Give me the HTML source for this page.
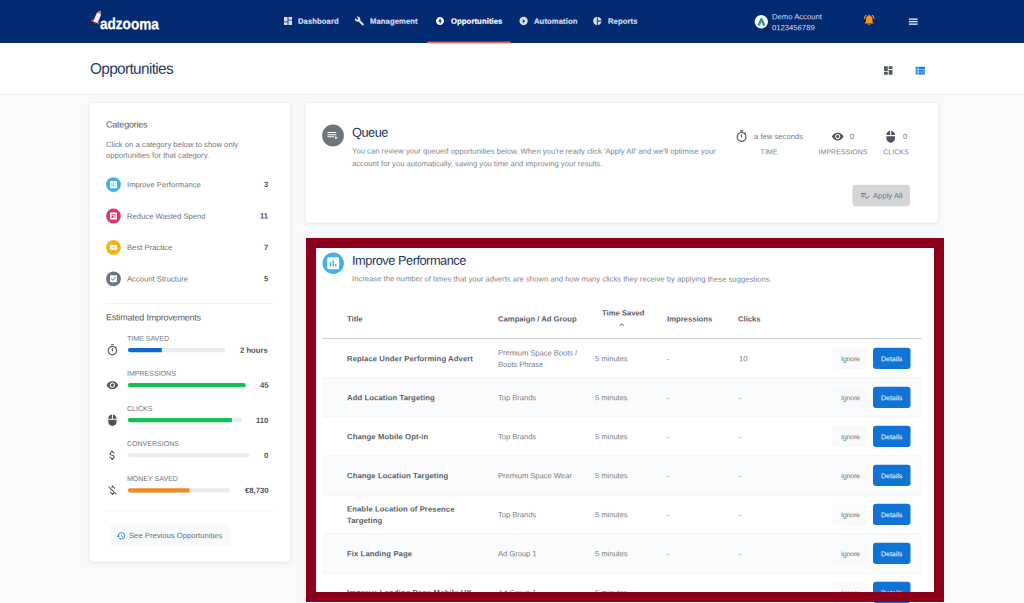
<!DOCTYPE html>
<html><head><meta charset="utf-8"><title>Opportunities</title>
<style>
*{box-sizing:border-box;margin:0;padding:0}
html,body{width:1024px;height:603px;overflow:hidden}
body{font-family:"Liberation Sans",sans-serif;background:#f7f9fb;position:relative}
.abs{position:absolute}
.t{white-space:nowrap;line-height:1}
svg{display:block;overflow:visible}
</style></head><body>
<div class="abs" style="left:0px;top:43px;width:1024px;height:51.5px;background:#fff;border-bottom:1px solid #eceef2;"></div>
<svg class="abs" style="left:0;top:0" width="1024" height="603" viewBox="0 0 1024 603">
<defs><filter id="sh" x="-5%" y="-5%" width="110%" height="110%"><feDropShadow dx="0" dy="0.8" stdDeviation="1.6" flood-color="#3c465a" flood-opacity=".17"/></filter></defs>
<rect x="0" y="0" width="1024" height="43" fill="#012a70"/>
<svg x="88.3" y="8.7" width="17.3" height="19.5" viewBox="0 0 16 18">
<g transform="rotate(24 8 9)">
<path d="M8 1.2 C9.6 2.6 10.2 4.2 10.2 6.2 L10.2 13 L5.8 13 L5.8 6.2 C5.8 4.2 6.4 2.6 8 1.2Z" fill="#f4eef0"/>
<path d="M8 1.2 C8.9 2 9.5 2.9 9.8 3.9 L6.2 3.9 C6.5 2.9 7.1 2 8 1.2Z" fill="#e8596b"/>
<path d="M5.8 10 L3.4 13.4 L5.8 13.4Z M10.2 10 L12.6 13.4 L10.2 13.4Z" fill="#d8475c"/>
<path d="M6.6 13 L9.4 13 L8 15.2Z" fill="#b03a55" opacity=".8"/>
</g></svg>
<svg x="282.6" y="15.6" width="10.8" height="10.8" viewBox="0 0 24 24"><path fill="#d3ddf0" d="M3 13h8V3H3v10zm0 8h8v-6H3v6zm10 0h8V11h-8v10zm0-18v6h8V3h-8z"/></svg>
<svg x="354.5" y="16" width="10" height="10" viewBox="0 0 24 24"><path fill="#d3ddf0" d="M22.7 19l-9.1-9.1c.9-2.3.4-5-1.5-6.9-2-2-5-2.4-7.4-1.3L9 6 6 9 1.6 4.7C.4 7.1.9 10.1 2.9 12.1c1.9 1.9 4.6 2.4 6.9 1.5l9.1 9.1c.4.4 1 .4 1.4 0l2.3-2.3c.5-.4.5-1.1.1-1.4z"/></svg>
<svg x="435.2" y="16.2" width="9.6" height="9.6" viewBox="0 0 24 24"><path fill="#ffffff" d="M12 2.02c-5.51 0-9.98 4.47-9.98 9.98s4.47 9.98 9.98 9.98 9.98-4.47 9.98-9.98S17.51 2.02 12 2.02zM11.48 20v-6.26H8L13 4v6.26h3.35L11.48 20z"/></svg>
<rect x="427.2" y="41.6" width="83.4" height="1.8" fill="#f0626c"/>
<svg x="518.6" y="16" width="10" height="10" viewBox="0 0 24 24"><path fill="#d3ddf0" d="M12 2C6.48 2 2 6.48 2 12s4.48 10 10 10 10-4.48 10-10S17.52 2 12 2zm-2 14.5v-9l6 4.5-6 4.5z"/></svg>
<svg x="592.3" y="16" width="10" height="10" viewBox="0 0 24 24"><path fill="#d3ddf0" d="M11 2v20c-5.07-.5-9-4.79-9-10s3.93-9.5 9-10zm2.03 0v8.99H22c-.47-4.74-4.24-8.52-8.97-8.99zm0 11.01V22c4.74-.47 8.5-4.25 8.97-8.99h-8.97z"/></svg>
<svg x="754.6" y="15.1" width="13.4" height="13.4" viewBox="0 0 13.6 13.6"><circle cx="6.8" cy="6.8" r="6.8" fill="#fdfdfe"/>
<path d="M4.6 9.6 L6.8 4.3" stroke="#4285e8" stroke-width="2.5" stroke-linecap="round"/><path d="M7.1 4.5 L9.5 9.7" stroke="#2fa24f" stroke-width="2.4" stroke-linecap="round"/></svg>
<svg x="862.7" y="13.3" width="13" height="13" viewBox="0 0 24 24"><path fill="#f7941d" d="M7.58 4.08L6.15 2.65C3.75 4.48 2.17 7.3 2.03 10.5h2c.15-2.65 1.51-4.97 3.55-6.42zm12.39 6.42h2c-.15-3.2-1.73-6.02-4.12-7.85l-1.42 1.43c2.02 1.45 3.39 3.77 3.54 6.42zM18 11c0-3.07-1.64-5.64-4.5-6.32V4c0-.83-.67-1.5-1.5-1.5s-1.5.67-1.5 1.5v.68C7.63 5.36 6 7.92 6 11v5l-2 2v1h16v-1l-2-2v-5zm-6 11c.14 0 .27-.01.4-.04.65-.14 1.18-.58 1.44-1.18.1-.24.15-.5.15-.78h-4c.01 1.1.9 2 2.01 2z"/></svg>
<rect x="908.9" y="18.45" width="8.7" height="1.35" fill="#e4ebfa"/>
<rect x="908.9" y="20.95" width="8.7" height="1.35" fill="#e4ebfa"/>
<rect x="908.9" y="23.45" width="8.7" height="1.35" fill="#e4ebfa"/>
<svg x="882.6" y="64.8" width="11.3" height="11.3" viewBox="0 0 24 24"><path fill="#505a60" d="M3 13h8V3H3v10zm0 8h8v-6H3v6zm10 0h8V11h-8v10zm0-18v6h8V3h-8z"/></svg>
<svg x="913.4" y="64" width="13.2" height="13.2" viewBox="0 0 24 24"><path fill="#1c83e2" d="M4 14h4v-4H4v4zm0 5h4v-4H4v4zM4 9h4V5H4v4zm5 5h12v-4H9v4zm0 5h12v-4H9v4zM9 5v4h12V5H9z"/></svg>
<svg x="0" y="0" width="1024" height="603"><rect x="90" y="103.1" width="199.8" height="458.6" rx="2" fill="#fff" filter="url(#sh)"/></svg>
<circle cx="113.5" cy="184.6" r="7.4" fill="#41b1ec"/>
<svg x="108.8" y="179.9" width="9.4" height="9.4" viewBox="0 0 24 24"><path fill="#ffffff" d="M19 3H5c-1.1 0-2 .9-2 2v14c0 1.1.9 2 2 2h14c1.1 0 2-.9 2-2V5c0-1.1-.9-2-2-2zM9 17H7v-7h2v7zm4 0h-2V7h2v10zm4 0h-2v-4h2v4z"/></svg>
<circle cx="113.5" cy="216" r="7.4" fill="#e3306f"/>
<svg x="108.8" y="211.3" width="9.4" height="9.4" viewBox="0 0 24 24"><path fill="#ffffff" d="M19 3H5c-1.1 0-2 .9-2 2v14c0 1.1.9 2 2 2h14c1.1 0 2-.9 2-2V5c0-1.1-.9-2-2-2zm-2 6H7V7h10v2zm-5 8H7v-6h5v6zm5 0h-3v-2h3v2zm0-4h-3v-2h3v2z"/></svg>
<circle cx="113.5" cy="247.4" r="7.4" fill="#f0b31d"/>
<svg x="109.9" y="245" width="7.2" height="4.8" viewBox="0 0 7.2 4.8"><rect width="7.2" height="4.8" rx=".6" fill="#fff"/><circle cx="3.6" cy="2.4" r=".9" fill="#f0b31d"/></svg>
<circle cx="113.5" cy="278.8" r="7.4" fill="#6c757d"/>
<svg x="108.8" y="274.1" width="9.4" height="9.4" viewBox="0 0 24 24"><path fill="#ffffff" d="M19 3H5c-1.11 0-2 .9-2 2v14c0 1.1.89 2 2 2h14c1.11 0 2-.9 2-2V5c0-1.1-.89-2-2-2zm-9 14l-5-5 1.41-1.41L10 14.17l7.59-7.59L19 8l-9 9z"/></svg>
<rect x="105.6" y="303" width="168" height="1" fill="#f0f2f5"/>
<rect x="127.9" y="348" width="97.7" height="4.2" rx="2.1" fill="#e9ecf0"/>
<path d="M130 348H161.8V352.2H130A2.1 2.1 0 0 1 130 348Z" fill="#1268d3"/>
<svg x="106.1" y="343.8" width="12.6" height="12.6" viewBox="0 0 24 24"><path fill="#4d565e" d="M15 1H9v2h6V1zm-4 13h2V8h-2v6zm8.03-6.61l1.42-1.42c-.43-.51-.9-.99-1.41-1.41l-1.42 1.42C16.07 4.74 14.12 4 12 4c-4.97 0-9 4.03-9 9s4.02 9 9 9 9-4.03 9-9c0-2.12-.74-4.07-1.97-5.61zM12 20c-3.87 0-7-3.13-7-7s3.13-7 7-7 7 3.13 7 7-3.13 7-7 7z"/></svg>
<rect x="127.9" y="383.05" width="117.8" height="4.2" rx="2.1" fill="#e9ecf0"/>
<rect x="127.9" y="383.05" width="117.8" height="4.2" rx="2.1" fill="#14bf53"/>
<svg x="106.1" y="378.85" width="12.6" height="12.6" viewBox="0 0 24 24"><path fill="#4d565e" d="M12 4.5C7 4.5 2.73 7.61 1 12c1.73 4.39 6 7.5 11 7.5s9.27-3.11 11-7.5c-1.73-4.39-6-7.5-11-7.5zM12 17c-2.76 0-5-2.24-5-5s2.24-5 5-5 5 2.24 5 5-2.24 5-5 5zm0-8c-1.66 0-3 1.34-3 3s1.34 3 3 3 3-1.34 3-3-1.34-3-3-3z"/></svg>
<rect x="127.9" y="418.1" width="114.2" height="4.2" rx="2.1" fill="#e9ecf0"/>
<path d="M130 418.1H231.9V422.3H130A2.1 2.1 0 0 1 130 418.1Z" fill="#14bf53"/>
<svg x="106.1" y="413.9" width="12.6" height="12.6" viewBox="0 0 24 24"><path fill="#4d565e" d="M13 1.07V9h7c0-4.08-3.05-7.44-7-7.93zM4 15c0 4.42 3.58 8 8 8s8-3.58 8-8v-4H4v4zm7-13.93C7.05 1.56 4 4.92 4 9h7V1.07z"/></svg>
<rect x="127.9" y="453.15" width="121.8" height="4.2" rx="2.1" fill="#e9ecf0"/>
<svg x="106.1" y="448.95" width="12.6" height="12.6" viewBox="0 0 24 24"><path fill="#4d565e" d="M11.8 10.9c-2.27-.59-3-1.2-3-2.15 0-1.09 1.01-1.85 2.7-1.85 1.78 0 2.44.85 2.5 2.1h2.21c-.07-1.72-1.12-3.3-3.21-3.81V3h-3v2.16c-1.94.42-3.5 1.68-3.5 3.61 0 2.31 1.91 3.46 4.7 4.13 2.5.6 3 1.48 3 2.41 0 .69-.49 1.79-2.7 1.79-2.06 0-2.87-.92-2.98-2.1h-2.2c.12 2.19 1.76 3.42 3.68 3.83V21h3v-2.15c1.95-.37 3.5-1.5 3.5-3.55 0-2.84-2.43-3.81-4.7-4.4z"/></svg>
<rect x="127.9" y="488.2" width="102.4" height="4.2" rx="2.1" fill="#e9ecf0"/>
<path d="M130 488.2H189.5V492.4H130A2.1 2.1 0 0 1 130 488.2Z" fill="#f68a1e"/>
<svg x="106.1" y="484" width="12.6" height="12.6" viewBox="0 0 24 24"><path fill="#4d565e" d="M12.5 6.9c1.78 0 2.44.85 2.5 2.1h2.21c-.07-1.72-1.12-3.3-3.21-3.81V3h-3v2.16c-.53.12-1.03.3-1.48.54l1.47 1.47c.41-.17.91-.27 1.51-.27zM5.33 4.06L4.06 5.33 7.5 8.77c0 2.08 1.56 3.21 3.91 3.91l3.51 3.51c-.34.48-1.05.91-2.42.91-2.06 0-2.87-.92-2.98-2.1h-2.2c.12 2.19 1.76 3.42 3.68 3.83V21h3v-2.15c.96-.18 1.82-.55 2.45-1.12l2.22 2.22 1.27-1.27L5.33 4.06z"/></svg>
<rect x="105.6" y="510.5" width="168" height="1" fill="#f0f2f5"/>
<rect x="109.7" y="524.7" width="120.6" height="20.8" rx="2" fill="#f7f9fb"/>
<svg x="116.3" y="531" width="9.7" height="9.7" viewBox="0 0 24 24"><path fill="#1c7fde" d="M13 3c-4.97 0-9 4.03-9 9H1l3.89 3.89.07.14L9 12H6c0-3.87 3.13-7 7-7s7 3.13 7 7-3.13 7-7 7c-1.93 0-3.68-.79-4.94-2.06l-1.42 1.42C8.27 19.99 10.51 21 13 21c4.97 0 9-4.03 9-9s-4.03-9-9-9zm-1 5v5l4.28 2.54.72-1.21-3.5-2.08V8H12z"/></svg>
<svg x="0" y="0" width="1024" height="603"><rect x="305.9" y="103.1" width="631.5" height="119.7" rx="2" fill="#fff" filter="url(#sh)"/></svg>
<circle cx="333" cy="135.5" r="10.9" fill="#6c757d"/>
<svg x="326.4" y="129.5" width="12.4" height="12.4" viewBox="0 0 24 24"><path fill="#ffffff" d="M19 9H2v2h17V9zm0-4H2v2h17V5zM2 15h13v-2H2v2zm15-2v6l5-3-5-3z"/></svg>
<svg x="735" y="129.8" width="13.2" height="13.2" viewBox="0 0 24 24"><path fill="#4d565e" d="M15 1H9v2h6V1zm-4 13h2V8h-2v6zm8.03-6.61l1.42-1.42c-.43-.51-.9-.99-1.41-1.41l-1.42 1.42C16.07 4.74 14.12 4 12 4c-4.97 0-9 4.03-9 9s4.02 9 9 9 9-4.03 9-9c0-2.12-.74-4.07-1.97-5.61zM12 20c-3.87 0-7-3.13-7-7s3.13-7 7-7 7 3.13 7 7-3.13 7-7 7z"/></svg>
<svg x="831.4" y="130.3" width="12.6" height="12.6" viewBox="0 0 24 24"><path fill="#4d565e" d="M12 4.5C7 4.5 2.73 7.61 1 12c1.73 4.39 6 7.5 11 7.5s9.27-3.11 11-7.5c-1.73-4.39-6-7.5-11-7.5zM12 17c-2.76 0-5-2.24-5-5s2.24-5 5-5 5 2.24 5 5-2.24 5-5 5zm0-8c-1.66 0-3 1.34-3 3s1.34 3 3 3 3-1.34 3-3-1.34-3-3-3z"/></svg>
<svg x="884.2" y="130.2" width="13" height="13" viewBox="0 0 24 24"><path fill="#4d565e" d="M13 1.07V9h7c0-4.08-3.05-7.44-7-7.93zM4 15c0 4.42 3.58 8 8 8s8-3.58 8-8v-4H4v4zm7-13.93C7.05 1.56 4 4.92 4 9h7V1.07z"/></svg>
<rect x="852.4" y="184.7" width="57.5" height="21.6" rx="3" fill="#d4d5d8"/>
<svg x="860.2" y="190.6" width="10" height="10" viewBox="0 0 24 24"><path fill="#6f7780" d="M14 10H2v2h12v-2zm0-4H2v2h12V6zM2 16h8v-2H2v2zm19.5-4.5L23 13l-6.99 7-4.51-4.5L13 14l3.01 3 5.49-5.5z"/></svg>
<svg x="0" y="0" width="1024" height="603"><rect x="305.9" y="238" width="631.5" height="400" rx="2" fill="#fff" filter="url(#sh)"/></svg>
<circle cx="333.2" cy="263.2" r="10.7" fill="#41b1ec"/>
<svg x="325.3" y="255.4" width="15.8" height="15.8" viewBox="0 0 24 24"><path fill="#ffffff" d="M19 3H5c-1.1 0-2 .9-2 2v14c0 1.1.9 2 2 2h14c1.1 0 2-.9 2-2V5c0-1.1-.9-2-2-2zM9 17H7v-7h2v7zm4 0h-2V7h2v10zm4 0h-2v-4h2v4z"/></svg>
<svg x="617" y="320" width="9.4" height="9.4" viewBox="0 0 24 24"><path fill="#575f68" d="M7.41 15.41L12 10.83l4.59 4.58L18 14l-6-6-6 6z"/></svg>
<rect x="322.5" y="338" width="599" height="1.1" fill="#cfd3d7"/>
<rect x="832.4" y="347.7" width="34.3" height="21.2" rx="3" fill="#f8f9fb"/>
<rect x="873" y="347.7" width="37.5" height="21.2" rx="3" fill="#0f74d6"/>
<rect x="322.5" y="378" width="599" height="39" fill="#fafbfd"/>
<rect x="322.5" y="377.5" width="599" height="1" fill="#f1f3f6"/>
<rect x="832.4" y="386.7" width="34.3" height="21.2" rx="3" fill="#f8f9fb"/>
<rect x="873" y="386.7" width="37.5" height="21.2" rx="3" fill="#0f74d6"/>
<rect x="322.5" y="416.5" width="599" height="1" fill="#f1f3f6"/>
<rect x="832.4" y="425.7" width="34.3" height="21.2" rx="3" fill="#f8f9fb"/>
<rect x="873" y="425.7" width="37.5" height="21.2" rx="3" fill="#0f74d6"/>
<rect x="322.5" y="456" width="599" height="39" fill="#fafbfd"/>
<rect x="322.5" y="455.5" width="599" height="1" fill="#f1f3f6"/>
<rect x="832.4" y="464.7" width="34.3" height="21.2" rx="3" fill="#f8f9fb"/>
<rect x="873" y="464.7" width="37.5" height="21.2" rx="3" fill="#0f74d6"/>
<rect x="322.5" y="494.5" width="599" height="1" fill="#f1f3f6"/>
<rect x="832.4" y="503.7" width="34.3" height="21.2" rx="3" fill="#f8f9fb"/>
<rect x="873" y="503.7" width="37.5" height="21.2" rx="3" fill="#0f74d6"/>
<rect x="322.5" y="534" width="599" height="39" fill="#fafbfd"/>
<rect x="322.5" y="533.5" width="599" height="1" fill="#f1f3f6"/>
<rect x="832.4" y="542.7" width="34.3" height="21.2" rx="3" fill="#f8f9fb"/>
<rect x="873" y="542.7" width="37.5" height="21.2" rx="3" fill="#0f74d6"/>
<rect x="322.5" y="572.5" width="599" height="1" fill="#f1f3f6"/>
<rect x="832.4" y="581.7" width="34.3" height="21.2" rx="3" fill="#f8f9fb"/>
<rect x="873" y="581.7" width="37.5" height="21.2" rx="3" fill="#0f74d6"/>
</svg>
<div class="abs t" style="top:16px;font-size:15.5px;color:#ffffff;-webkit-text-stroke:.3px #fff;transform:translateY(0.10px) rotate(.05deg) scaleX(0.875);transform-origin:0 50%;font-weight:bold;left:100px;">adzooma</div>
<div class="abs t" style="top:17px;font-size:7.68px;color:#d3ddf0;-webkit-text-stroke:.2px #d3ddf0;transform:translateY(0.80px) rotate(.05deg);font-weight:bold;letter-spacing:0.08px;left:298.2px;">Dashboard</div>
<div class="abs t" style="top:17px;font-size:7.68px;color:#d3ddf0;-webkit-text-stroke:.2px #d3ddf0;transform:translateY(0.80px) rotate(.05deg);font-weight:bold;letter-spacing:0.08px;left:370px;">Management</div>
<div class="abs t" style="top:17px;font-size:7.68px;color:#ffffff;-webkit-text-stroke:.2px #fff;transform:translateY(0.80px) rotate(.05deg);font-weight:bold;letter-spacing:0.09px;left:450.6px;">Opportunities</div>
<div class="abs t" style="top:17px;font-size:7.68px;color:#d3ddf0;-webkit-text-stroke:.2px #d3ddf0;transform:translateY(0.80px) rotate(.05deg);font-weight:bold;letter-spacing:0.08px;left:533.5px;">Automation</div>
<div class="abs t" style="top:17px;font-size:7.68px;color:#d3ddf0;-webkit-text-stroke:.2px #d3ddf0;transform:translateY(0.80px) rotate(.05deg);font-weight:bold;letter-spacing:0.08px;left:607.6px;">Reports</div>
<div class="abs t" style="top:13px;font-size:7.68px;color:#d5def2;transform:translateY(0.20px) rotate(.05deg);left:771.8px;">Demo Account</div>
<div class="abs t" style="top:24px;font-size:7.68px;color:#d5def2;transform:translateY(0.30px) rotate(.05deg);left:771.8px;">0123456789</div>
<div class="abs t" style="top:60px;font-size:15.36px;color:#1f3b6b;transform:translateY(0.80px) rotate(.05deg);letter-spacing:-0.64px;left:90.3px;">Opportunities</div>
<div class="abs t" style="top:120px;font-size:8.96px;color:#535b66;transform:translateY(0.40px) rotate(.05deg);letter-spacing:-0.19px;left:106.2px;">Categories</div>
<div class="abs t" style="top:141px;font-size:7.68px;color:#6f7781;transform:translateY(0.00px) rotate(.05deg);left:106.2px;">Click on a category below to show only</div>
<div class="abs t" style="top:151px;font-size:7.68px;color:#6f7781;transform:translateY(0.80px) rotate(.05deg);left:106.2px;">opportunities for that category.</div>
<div class="abs t" style="top:181px;font-size:7.68px;color:#6a727c;transform:translateY(0.30px) rotate(.05deg);left:126.8px;">Improve Performance</div>
<div class="abs t" style="top:181px;font-size:7.68px;color:#4a525c;transform:translateY(0.10px) rotate(.05deg);font-weight:bold;right:755.8px;">3</div>
<div class="abs t" style="top:212px;font-size:7.68px;color:#6a727c;transform:translateY(0.70px) rotate(.05deg);left:126.8px;">Reduce Wasted Spend</div>
<div class="abs t" style="top:212px;font-size:7.68px;color:#4a525c;transform:translateY(0.50px) rotate(.05deg);font-weight:bold;right:755.8px;">11</div>
<div class="abs t" style="top:244px;font-size:7.68px;color:#6a727c;transform:translateY(0.10px) rotate(.05deg);left:126.8px;">Best Practice</div>
<div class="abs t" style="top:243px;font-size:7.68px;color:#4a525c;transform:translateY(0.90px) rotate(.05deg);font-weight:bold;right:755.8px;">7</div>
<div class="abs t" style="top:275px;font-size:7.68px;color:#6a727c;transform:translateY(0.50px) rotate(.05deg);left:126.8px;">Account Structure</div>
<div class="abs t" style="top:275px;font-size:7.68px;color:#4a525c;transform:translateY(0.30px) rotate(.05deg);font-weight:bold;right:755.8px;">5</div>
<div class="abs t" style="top:313px;font-size:8.96px;color:#535b66;transform:translateY(0.40px) rotate(.05deg);letter-spacing:-0.19px;left:106.2px;">Estimated Improvements</div>
<div class="abs t" style="top:334px;font-size:7.04px;color:#6d757e;transform:translateY(0.80px) rotate(.05deg);left:126.8px;">TIME SAVED</div>
<div class="abs t" style="top:346px;font-size:7.68px;color:#4a525c;transform:translateY(0.80px) rotate(.05deg);font-weight:bold;right:755.8px;">2 hours</div>
<div class="abs t" style="top:369px;font-size:7.04px;color:#6d757e;transform:translateY(0.85px) rotate(.05deg);left:126.8px;">IMPRESSIONS</div>
<div class="abs t" style="top:381px;font-size:7.68px;color:#4a525c;transform:translateY(0.85px) rotate(.05deg);font-weight:bold;right:755.8px;">45</div>
<div class="abs t" style="top:404px;font-size:7.04px;color:#6d757e;transform:translateY(0.90px) rotate(.05deg);left:126.8px;">CLICKS</div>
<div class="abs t" style="top:416px;font-size:7.68px;color:#4a525c;transform:translateY(0.90px) rotate(.05deg);font-weight:bold;right:755.8px;">110</div>
<div class="abs t" style="top:439px;font-size:7.04px;color:#6d757e;transform:translateY(0.95px) rotate(.05deg);left:126.8px;">CONVERSIONS</div>
<div class="abs t" style="top:451px;font-size:7.68px;color:#4a525c;transform:translateY(0.95px) rotate(.05deg);font-weight:bold;right:755.8px;">0</div>
<div class="abs t" style="top:475px;font-size:7.04px;color:#6d757e;transform:translateY(0.00px) rotate(.05deg);left:126.8px;">MONEY SAVED</div>
<div class="abs t" style="top:487px;font-size:7.68px;color:#4a525c;transform:translateY(0.00px) rotate(.05deg);font-weight:bold;right:755.8px;">€8,730</div>
<div class="abs t" style="top:532px;font-size:7.68px;color:#6a727c;transform:translateY(0.10px) rotate(.05deg);left:129px;">See Previous Opportunities</div>
<div class="abs t" style="top:126px;font-size:12.8px;color:#1d3561;transform:translateY(0.80px) rotate(.05deg);letter-spacing:-0.5px;left:352.2px;">Queue</div>
<div class="abs t" style="top:147px;font-size:7.68px;color:#7d858e;transform:translateY(0.70px) rotate(.05deg);left:352.2px;">You can review your queued opportunities below. When you're ready click 'Apply All' and we'll optimise your</div>
<div class="abs t" style="top:160px;font-size:7.68px;color:#7d858e;transform:translateY(0.20px) rotate(.05deg);left:352.2px;">account for you automatically, saving you time and improving your results.</div>
<div class="abs t" style="top:133px;font-size:7.68px;color:#727a83;transform:translateY(0.10px) rotate(.05deg);left:753.7px;">a few seconds</div>
<div class="abs t" style="top:148px;font-size:7.04px;color:#7d858e;transform:translateY(0.30px) rotate(.05deg);left:618.6px;width:300px;text-align:center;">TIME</div>
<div class="abs t" style="top:133px;font-size:7.68px;color:#727a83;transform:translateY(0.10px) rotate(.05deg);left:850px;">0</div>
<div class="abs t" style="top:148px;font-size:7.04px;color:#7d858e;transform:translateY(0.30px) rotate(.05deg);left:692.5px;width:300px;text-align:center;">IMPRESSIONS</div>
<div class="abs t" style="top:133px;font-size:7.68px;color:#727a83;transform:translateY(0.10px) rotate(.05deg);left:902.7px;">0</div>
<div class="abs t" style="top:148px;font-size:7.04px;color:#7d858e;transform:translateY(0.30px) rotate(.05deg);left:745.6px;width:300px;text-align:center;">CLICKS</div>
<div class="abs t" style="top:192px;font-size:7.68px;color:#6f7780;transform:translateY(0.20px) rotate(.05deg);left:873px;">Apply All</div>
<div class="abs t" style="top:254px;font-size:12.8px;color:#1d3561;transform:translateY(0.70px) rotate(.05deg);letter-spacing:-0.48px;left:352.1px;">Improve Performance</div>
<div class="abs t" style="top:275px;font-size:7.68px;color:#7d858e;transform:translateY(0.50px) rotate(.05deg);left:352.1px;">Increase the number of times that your adverts are shown and how many clicks they receive by applying these suggestions.</div>
<div class="abs t" style="top:315px;font-size:7.68px;color:#575f68;transform:translateY(0.50px) rotate(.05deg);font-weight:bold;left:347.2px;">Title</div>
<div class="abs t" style="top:315px;font-size:7.68px;color:#575f68;transform:translateY(0.50px) rotate(.05deg);font-weight:bold;left:497.6px;">Campaign / Ad Group</div>
<div class="abs t" style="top:309px;font-size:7.68px;color:#575f68;transform:translateY(0.60px) rotate(.05deg);font-weight:bold;left:601.6px;">Time Saved</div>
<div class="abs t" style="top:315px;font-size:7.68px;color:#575f68;transform:translateY(0.50px) rotate(.05deg);font-weight:bold;left:666.6px;">Impressions</div>
<div class="abs t" style="top:315px;font-size:7.68px;color:#575f68;transform:translateY(0.50px) rotate(.05deg);font-weight:bold;left:738.4px;">Clicks</div>
<div class="abs t" style="top:355px;font-size:7.68px;color:#575f68;transform:translateY(0.25px) rotate(.05deg);font-weight:bold;letter-spacing:0.1px;left:346.8px;">Replace Under Performing Advert</div>
<div class="abs t" style="top:349px;font-size:7.68px;color:#767e87;transform:translateY(0.40px) rotate(.05deg);letter-spacing:-0.07px;left:497.6px;">Premium Space Boots /</div>
<div class="abs t" style="top:361px;font-size:7.68px;color:#767e87;transform:translateY(0.10px) rotate(.05deg);letter-spacing:-0.07px;left:497.6px;">Boots Phrase</div>
<div class="abs t" style="top:355px;font-size:7.68px;color:#767e87;transform:translateY(0.25px) rotate(.05deg);letter-spacing:-0.07px;left:594.9px;">5 minutes</div>
<div class="abs t" style="top:355px;font-size:7.68px;color:#767e87;transform:translateY(0.25px) rotate(.05deg);left:667.2px;">-</div>
<div class="abs t" style="top:355px;font-size:7.68px;color:#767e87;transform:translateY(0.25px) rotate(.05deg);left:738.7px;">10</div>
<div class="abs t" style="top:355px;font-size:7.04px;color:#6f7780;transform:translateY(0.25px) rotate(.05deg);letter-spacing:-0.2px;left:840.6px;">Ignore</div>
<div class="abs t" style="top:355px;font-size:7.04px;color:#ffffff;transform:translateY(0.25px) rotate(.05deg);letter-spacing:-0.05px;left:880.9px;">Details</div>
<div class="abs t" style="top:394px;font-size:7.68px;color:#575f68;transform:translateY(0.25px) rotate(.05deg);font-weight:bold;letter-spacing:0.1px;left:346.8px;">Add Location Targeting</div>
<div class="abs t" style="top:394px;font-size:7.68px;color:#767e87;transform:translateY(0.25px) rotate(.05deg);letter-spacing:-0.07px;left:497.6px;">Top Brands</div>
<div class="abs t" style="top:394px;font-size:7.68px;color:#767e87;transform:translateY(0.25px) rotate(.05deg);letter-spacing:-0.07px;left:594.9px;">5 minutes</div>
<div class="abs t" style="top:394px;font-size:7.68px;color:#767e87;transform:translateY(0.25px) rotate(.05deg);left:667.2px;">-</div>
<div class="abs t" style="top:394px;font-size:7.68px;color:#767e87;transform:translateY(0.25px) rotate(.05deg);left:738.7px;">-</div>
<div class="abs t" style="top:394px;font-size:7.04px;color:#6f7780;transform:translateY(0.25px) rotate(.05deg);letter-spacing:-0.2px;left:840.6px;">Ignore</div>
<div class="abs t" style="top:394px;font-size:7.04px;color:#ffffff;transform:translateY(0.25px) rotate(.05deg);letter-spacing:-0.05px;left:880.9px;">Details</div>
<div class="abs t" style="top:433px;font-size:7.68px;color:#575f68;transform:translateY(0.25px) rotate(.05deg);font-weight:bold;letter-spacing:0.1px;left:346.8px;">Change Mobile Opt-in</div>
<div class="abs t" style="top:433px;font-size:7.68px;color:#767e87;transform:translateY(0.25px) rotate(.05deg);letter-spacing:-0.07px;left:497.6px;">Top Brands</div>
<div class="abs t" style="top:433px;font-size:7.68px;color:#767e87;transform:translateY(0.25px) rotate(.05deg);letter-spacing:-0.07px;left:594.9px;">5 minutes</div>
<div class="abs t" style="top:433px;font-size:7.68px;color:#767e87;transform:translateY(0.25px) rotate(.05deg);left:667.2px;">-</div>
<div class="abs t" style="top:433px;font-size:7.68px;color:#767e87;transform:translateY(0.25px) rotate(.05deg);left:738.7px;">-</div>
<div class="abs t" style="top:433px;font-size:7.04px;color:#6f7780;transform:translateY(0.25px) rotate(.05deg);letter-spacing:-0.2px;left:840.6px;">Ignore</div>
<div class="abs t" style="top:433px;font-size:7.04px;color:#ffffff;transform:translateY(0.25px) rotate(.05deg);letter-spacing:-0.05px;left:880.9px;">Details</div>
<div class="abs t" style="top:472px;font-size:7.68px;color:#575f68;transform:translateY(0.25px) rotate(.05deg);font-weight:bold;letter-spacing:0.1px;left:346.8px;">Change Location Targeting</div>
<div class="abs t" style="top:472px;font-size:7.68px;color:#767e87;transform:translateY(0.25px) rotate(.05deg);letter-spacing:-0.07px;left:497.6px;">Premium Space Wear</div>
<div class="abs t" style="top:472px;font-size:7.68px;color:#767e87;transform:translateY(0.25px) rotate(.05deg);letter-spacing:-0.07px;left:594.9px;">5 minutes</div>
<div class="abs t" style="top:472px;font-size:7.68px;color:#767e87;transform:translateY(0.25px) rotate(.05deg);left:667.2px;">-</div>
<div class="abs t" style="top:472px;font-size:7.68px;color:#767e87;transform:translateY(0.25px) rotate(.05deg);left:738.7px;">-</div>
<div class="abs t" style="top:472px;font-size:7.04px;color:#6f7780;transform:translateY(0.25px) rotate(.05deg);letter-spacing:-0.2px;left:840.6px;">Ignore</div>
<div class="abs t" style="top:472px;font-size:7.04px;color:#ffffff;transform:translateY(0.25px) rotate(.05deg);letter-spacing:-0.05px;left:880.9px;">Details</div>
<div class="abs t" style="top:505px;font-size:7.68px;color:#575f68;transform:translateY(0.60px) rotate(.05deg);font-weight:bold;letter-spacing:0.1px;left:346.8px;">Enable Location of Presence</div>
<div class="abs t" style="top:516px;font-size:7.68px;color:#575f68;transform:translateY(0.90px) rotate(.05deg);font-weight:bold;letter-spacing:0.1px;left:346.8px;">Targeting</div>
<div class="abs t" style="top:511px;font-size:7.68px;color:#767e87;transform:translateY(0.25px) rotate(.05deg);letter-spacing:-0.07px;left:497.6px;">Top Brands</div>
<div class="abs t" style="top:511px;font-size:7.68px;color:#767e87;transform:translateY(0.25px) rotate(.05deg);letter-spacing:-0.07px;left:594.9px;">5 minutes</div>
<div class="abs t" style="top:511px;font-size:7.68px;color:#767e87;transform:translateY(0.25px) rotate(.05deg);left:667.2px;">-</div>
<div class="abs t" style="top:511px;font-size:7.68px;color:#767e87;transform:translateY(0.25px) rotate(.05deg);left:738.7px;">-</div>
<div class="abs t" style="top:511px;font-size:7.04px;color:#6f7780;transform:translateY(0.25px) rotate(.05deg);letter-spacing:-0.2px;left:840.6px;">Ignore</div>
<div class="abs t" style="top:511px;font-size:7.04px;color:#ffffff;transform:translateY(0.25px) rotate(.05deg);letter-spacing:-0.05px;left:880.9px;">Details</div>
<div class="abs t" style="top:550px;font-size:7.68px;color:#575f68;transform:translateY(0.25px) rotate(.05deg);font-weight:bold;letter-spacing:0.1px;left:346.8px;">Fix Landing Page</div>
<div class="abs t" style="top:550px;font-size:7.68px;color:#767e87;transform:translateY(0.25px) rotate(.05deg);letter-spacing:-0.07px;left:497.6px;">Ad Group 1</div>
<div class="abs t" style="top:550px;font-size:7.68px;color:#767e87;transform:translateY(0.25px) rotate(.05deg);letter-spacing:-0.07px;left:594.9px;">5 minutes</div>
<div class="abs t" style="top:550px;font-size:7.68px;color:#767e87;transform:translateY(0.25px) rotate(.05deg);left:667.2px;">-</div>
<div class="abs t" style="top:550px;font-size:7.68px;color:#767e87;transform:translateY(0.25px) rotate(.05deg);left:738.7px;">-</div>
<div class="abs t" style="top:550px;font-size:7.04px;color:#6f7780;transform:translateY(0.25px) rotate(.05deg);letter-spacing:-0.2px;left:840.6px;">Ignore</div>
<div class="abs t" style="top:550px;font-size:7.04px;color:#ffffff;transform:translateY(0.25px) rotate(.05deg);letter-spacing:-0.05px;left:880.9px;">Details</div>
<div class="abs t" style="top:589px;font-size:7.68px;color:#575f68;transform:translateY(0.25px) rotate(.05deg);font-weight:bold;letter-spacing:0.1px;left:346.8px;">Improve Landing Page Mobile UX</div>
<div class="abs t" style="top:589px;font-size:7.68px;color:#767e87;transform:translateY(0.25px) rotate(.05deg);letter-spacing:-0.07px;left:497.6px;">Ad Group 1</div>
<div class="abs t" style="top:589px;font-size:7.68px;color:#767e87;transform:translateY(0.25px) rotate(.05deg);letter-spacing:-0.07px;left:594.9px;">5 minutes</div>
<div class="abs t" style="top:589px;font-size:7.68px;color:#767e87;transform:translateY(0.25px) rotate(.05deg);left:667.2px;">-</div>
<div class="abs t" style="top:589px;font-size:7.68px;color:#767e87;transform:translateY(0.25px) rotate(.05deg);left:738.7px;">-</div>
<div class="abs t" style="top:589px;font-size:7.04px;color:#6f7780;transform:translateY(0.25px) rotate(.05deg);letter-spacing:-0.2px;left:840.6px;">Ignore</div>
<div class="abs t" style="top:589px;font-size:7.04px;color:#ffffff;transform:translateY(0.25px) rotate(.05deg);letter-spacing:-0.05px;left:880.9px;">Details</div>
<div class="abs" style="left:306px;top:238px;width:638px;height:364px;border:10px solid #8b001b"></div>
</body></html>
